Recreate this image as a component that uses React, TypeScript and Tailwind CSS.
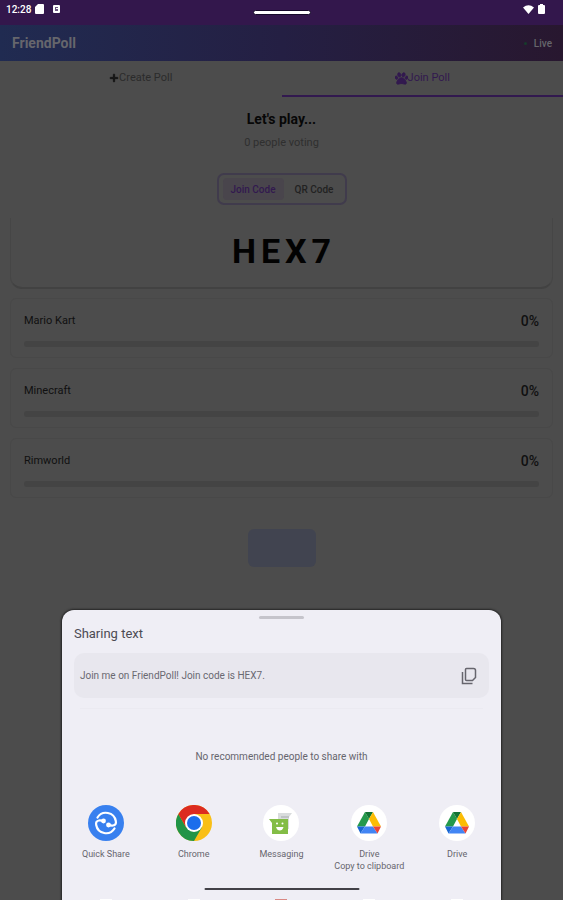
import type { ReactNode } from "react";
import { FaPlus, FaPaw } from "react-icons/fa6";

const options = [
  { name: "Mario Kart", share: 0 },
  { name: "Minecraft", share: 0 },
  { name: "Rimworld", share: 0 },
];

const nextRow = ["bg-white", "bg-white", "bg-[#d98883]", "bg-white", "bg-white"];

function StatusBar() {
  return (
    <div className="relative flex h-[25px] items-start justify-between bg-[#33174c] pl-[6px] pr-[18px] text-white">
      <div className="flex h-[18px] items-center text-[10px] font-medium">
        <span>12:28</span>
        <svg className="ml-[4px] h-[10px] w-[9px]" viewBox="0 0 9 10" fill="currentColor">
          <path d="M3 0h5q1 0 1 1v8q0 1-1 1H1q-1 0-1-1V3z" />
        </svg>
        <svg className="ml-[9px] h-[8px] w-[7px]" viewBox="0 0 7 8">
          <rect width="7" height="8" rx="1" fill="white" />
          <path d="M2 2h3v1H3v1h2v2H2z" fill="#6b5580" />
        </svg>
      </div>
      <div className="absolute left-1/2 top-[10px] box-content h-[3px] w-[56px] -translate-x-1/2 rounded-full border border-[#170a2b] bg-white" />
      <div className="flex h-[18px] items-center gap-[4px]">
        <svg className="h-[9px] w-[11px]" viewBox="0 0 11 9" fill="currentColor">
          <path d="M0 2.5Q5.500-2 11 2.500L5.500 9z" />
        </svg>
        <svg className="h-[10px] w-[7px]" viewBox="0 0 7 10" fill="currentColor">
          <path d="M2 1V0h3v1h1q1 0 1 1v7q0 1-1 1H1q-1 0-1-1V2q0-1 1-1z" />
        </svg>
      </div>
    </div>
  );
}

function QuickShareIcon() {
  return (
    <svg viewBox="0 0 36 36" className="size-9">
      <circle cx="18" cy="18" r="18" fill="#3880ef" />
      <g fill="none" stroke="white" strokeWidth="2.2" strokeLinecap="round">
        <path d="M9.500 12.500a10 10 0 0 1 18.300 3.500q.8 4-2.800 4.500-2 .3-4.500-.8" />
        <path d="M26.500 23.500a10 10 0 0 1-18.300-3.500q-.8-4 2.800-4.500 2-.3 4.500.8" />
      </g>
      <circle cx="15.500" cy="16" r="2.400" fill="white" />
      <circle cx="20.500" cy="20" r="2.400" fill="white" />
    </svg>
  );
}

function ChromeIcon() {
  return (
    <svg viewBox="0 0 36 36" className="size-9">
      <circle cx="18" cy="18" r="18" fill="#f9bf16" />
      <path d="M18 18L25.800 22.500 18 36A18 18 0 0 1 2.400 9L10.200 22.500z" fill="#209447" />
      <path d="M18 18L10.200 22.500 2.400 9A18 18 0 0 1 33.600 9H18z" fill="#dc2b20" />
      <circle cx="18" cy="18" r="9" fill="white" />
      <circle cx="18" cy="18" r="7" fill="#1b6dec" />
    </svg>
  );
}

function MessagingIcon() {
  return (
    <svg viewBox="0 0 36 36" className="size-9">
      <circle cx="18" cy="18" r="18" fill="white" />
      <path d="M15 8h14l-3 4v12H15z" fill="#d9dcdd" />
      <path d="M18 11h8v2h-8z" fill="#bfc3c5" />
      <path d="M6 14h19v15H9V18z" fill="#83bd46" />
      <circle cx="14" cy="18.500" r="1" fill="white" />
      <circle cx="19.500" cy="18.500" r="1" fill="white" />
      <path d="M13 22h7.500q-1 3.500-3.700 3.500T13 22z" fill="white" />
    </svg>
  );
}

function DriveIcon() {
  return (
    <svg viewBox="0 0 36 36" className="size-9">
      <circle cx="18" cy="18" r="18" fill="white" />
      <path d="M14 7L6 21.500h8L18 14z" fill="#24994b" />
      <path d="M14 7h8l-4 7z" fill="#137333" />
      <path d="M22 7l8 14.500h-8L18 14z" fill="#fbbc04" />
      <path d="M6 21.500h8L9.500 28.500z" fill="#1967d2" />
      <path d="M14 21.500h8l4.500 7h-17z" fill="#4285f4" />
      <path d="M22 21.500h8L26.500 28.500z" fill="#ea4335" />
    </svg>
  );
}

function ShareTarget({ icon, label, detail }: { icon: ReactNode; label: string; detail?: string }) {
  return (
    <button type="button" className="flex min-w-0 flex-1 flex-col items-center whitespace-nowrap text-[9px] leading-3 text-[#66656d]">
      {icon}
      <span className="mt-[7px]">{label}</span>
      {detail && <span>{detail}</span>}
    </button>
  );
}

function ShareSheet() {
  return (
    <section aria-label="Sharing text" className="absolute inset-x-[11%] bottom-0 h-[290px] overflow-hidden rounded-t-[12px] bg-[#efeef5] shadow-[0_0_2px_1px_#252525]">
      <div className="mx-auto mt-[6px] h-[3px] w-[45px] rounded-full bg-[#c5c4cb]" />
      <h2 className="mx-[12px] mt-[7px] text-[13px] leading-4 text-[#4c4b53]">Sharing text</h2>
      <div className="mx-[12px] mt-[11px] flex h-[45px] items-center justify-between rounded-[10px] bg-[#e8e7ee] pl-[6px] pr-[12px]">
        <p className="text-[10px] text-[#6a6971]">Join me on FriendPoll! Join code is HEX7.</p>
        <button type="button" aria-label="Copy text" className="text-[#66656d]">
          <svg viewBox="0 0 16 18" className="h-[18px] w-4" fill="none" stroke="currentColor" strokeWidth="1.500">
            <path d="M5.500 1.500h7q2 0 2 2v7l-3 3h-6q-1 0-1-1v-10q0-1 1-1zM1.500 5v11.500h10" />
          </svg>
        </button>
      </div>
      <div className="mx-[18px] mt-[10px] h-px bg-[#ebeaf1]" />
      <p className="mt-[40px] text-center text-[10px] leading-4 text-[#66656d]">No recommended people to share with</p>
      <div className="mt-[40px] flex">
        <ShareTarget icon={<QuickShareIcon />} label="Quick Share" />
        <ShareTarget icon={<ChromeIcon />} label="Chrome" />
        <ShareTarget icon={<MessagingIcon />} label="Messaging" />
        <ShareTarget icon={<DriveIcon />} label="Drive" detail="Copy to clipboard" />
        <ShareTarget icon={<DriveIcon />} label="Drive" />
      </div>
      <div className="absolute bottom-[10px] left-1/2 h-[2px] w-[155px] -translate-x-1/2 rounded-full bg-[#424147]" />
      <div className="absolute inset-x-0 bottom-0 flex h-px">
        {nextRow.map((color, i) => (
          <span key={i} className="flex flex-1 justify-center">
            <i className={`h-px w-3 ${color}`} />
          </span>
        ))}
      </div>
    </section>
  );
}

export default function App() {
  return (
    <div className="relative min-h-screen overflow-hidden bg-[#4c4c4c] font-[Roboto,sans-serif]">
      <StatusBar />
      <header className="flex h-9 items-center justify-between bg-linear-to-r from-[#202b51] via-[#241f43] to-[#28172f] pl-3 pr-[11px] text-[#66666c]">
        <h1 className="text-[14px] font-bold">FriendPoll</h1>
        <span className="flex items-center gap-[7px] text-[10px] font-medium">
          <i className="size-[3px] rounded-full bg-[#173b2c]" />Live
        </span>
      </header>
      <nav className="grid h-9 grid-cols-2 text-[11px]">
        <button type="button" className="flex items-center justify-center border-b-2 border-transparent text-[#2b2b2b]">
          <FaPlus className="size-[10px] stroke-current stroke-[50] text-[#151515]" />Create Poll
        </button>
        <button type="button" className="flex items-center justify-center border-b-2 border-[#32194f] text-[#32194f]">
          <FaPaw className="size-[13px] stroke-current stroke-[36]" />Join Poll
        </button>
      </nav>
      <main className="px-[10px]">
        <h2 className="pt-[12px] text-center text-[14px] leading-5 font-bold text-[#070707]">Let's play...</h2>
        <p className="mt-[6px] text-center text-[11px] leading-4 text-[#2f2f2f]">0 people voting</p>
        <div className="mx-auto mt-[22px] flex h-[32px] w-[130px] items-center rounded-[7px] border-2 border-[#403b4c] pl-[4px] text-[10px] font-medium">
          <button type="button" className="h-[22px] flex-1 rounded-[4px] bg-[#49454c] text-[#32194f]">Join Code</button>
          <button type="button" className="h-[22px] flex-1 text-[#222222]">QR Code</button>
        </div>
        <div className="mt-[13px] flex h-[71px] items-center justify-center rounded-b-[12px] border-x border-b-2 border-x-[#464646] border-b-[#424242] pb-[2px] pl-[5px] text-[34px] font-bold tracking-[5px] text-[#020202]">HEX7</div>
        <div className="mt-[9px] grid gap-[10px]">
          {options.map(({ name, share }) => (
            <article key={name} className="h-[60px] rounded-[6px] border border-[#484848] px-[13px] pt-[12px]">
              <div className="flex h-5 items-center justify-between text-[#101010]">
                <h3 className="text-[11px]">{name}</h3>
                <span className="text-[14px] font-medium">{share}%</span>
              </div>
              <div className="mt-[10px] h-[6px] overflow-hidden rounded-full bg-[#444444]">
                <div className="h-full bg-[#32194f]" style={{ width: `${share}%` }} />
              </div>
            </article>
          ))}
        </div>
        <button type="button" aria-label="Share poll" className="mx-auto mt-[31px] block h-[38px] w-[68px] rounded-[6px] bg-[#414450]" />
      </main>
      <ShareSheet />
    </div>
  );
}
